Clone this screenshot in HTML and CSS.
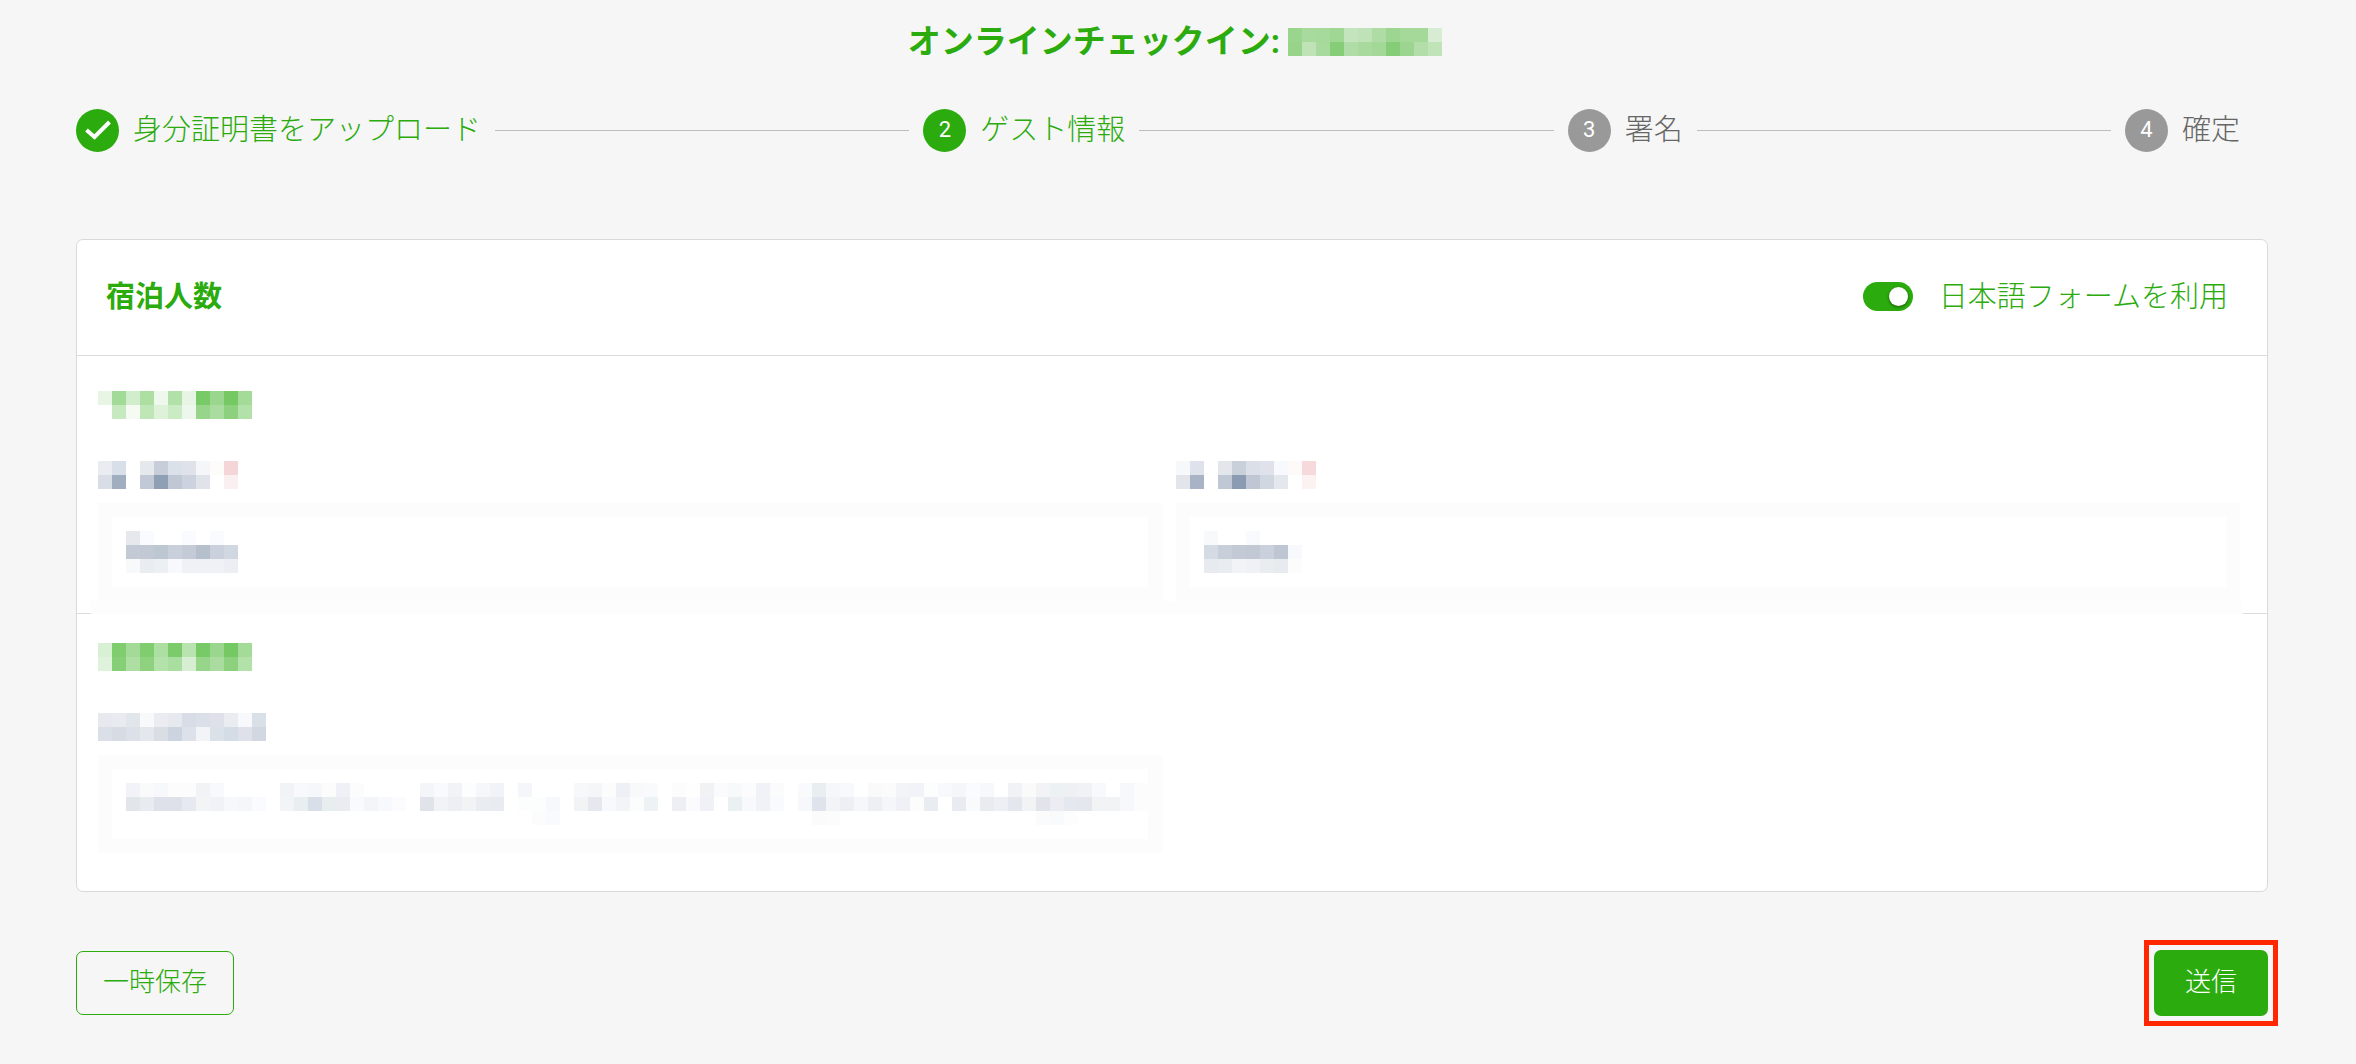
FILE: index.html
```html
<!DOCTYPE html>
<html lang="ja">
<head>
<meta charset="utf-8">
<meta name="viewport" content="width=device-width, initial-scale=1">
<title>オンラインチェックイン</title>
<link rel="stylesheet" href="styles.css">
<script src="mosaic.js" defer></script>
</head>
<body>
<main class="page">
  <h1 class="title">
    <span>オンラインチェックイン:</span>
    <svg class="mosaic" data-rows="9ad58d a8da9d a6da9b a1d795 c3e4bc c0e2b8 aedca4 9cd690 a5d99a a5d99a d8ecd4|97d48a bfe2b7 a8da9d 86cd78 b0dda7 a8da9d a3d898 86cd78 9cd58f b3deaa c0e3b8"></svg>
  </h1>

  <ol class="steps">
    <li class="step is-active">
      <span class="step-dot">
        <svg width="26" height="20" viewBox="0 0 26 20" aria-hidden="true"><path d="M1.500 10 L9.500 17 L24.500 2" fill="none" stroke="#fff" stroke-width="4"/></svg>
      </span>
      <span class="step-label">身分証明書をアップロード</span>
    </li>
    <li class="step-line" role="presentation"></li>
    <li class="step is-active"><span class="step-dot">2</span><span class="step-label">ゲスト情報</span></li>
    <li class="step-line" role="presentation"></li>
    <li class="step"><span class="step-dot">3</span><span class="step-label">署名</span></li>
    <li class="step-line" role="presentation"></li>
    <li class="step"><span class="step-dot">4</span><span class="step-label">確定</span></li>
  </ol>

  <form>
    <div class="card">
      <header class="card-header">
        <h2 class="card-title">宿泊人数</h2>
        <div class="switch">
          <input class="switch-input" type="checkbox" role="switch" id="jp-form" checked>
          <label for="jp-form">日本語フォームを利用</label>
        </div>
      </header>

      <section class="section">
        <h3 class="section-title"><svg class="mosaic" data-rows="e8f5e5 a2da97 d1edcb addfa3 eef8ec b1e0a8 e8f4e4 78ca67 9ad68e 75c963 a5db99|- c7e9c0 f5fbf3 bee6b6 def2d9 cbebc4 edf7eb 97d58a a9dc9e 8dd17e b2e1a9"></svg></h3>
        <div class="fields">
          <div class="field">
            <label class="field-label" for="field-a"><svg class="mosaic" data-rows="e9edf1 d9dfe8 - e5e9ee c8ced9 dbe1e9 dfe2e8 f4f6f9 fefcfa f5d6d8|d9dee6 a1aec0 - c2c9d6 8f9fb4 c1c8d5 ccd3de e0e4ea - fbf0f0"></svg></label>
            <div class="field-box">
              <input class="field-input" type="text" id="field-a">
              <svg class="mosaic field-value" data-rows="e5e9ee fafbfe - - fafbfe - fafbfe -|c3cad6 c3c9d4 bcc7d1 c9d0db c4cbd6 b6c0cd cad1dc d0d7e0|f8f9fb e9edf2 ecf0f3 f8f9fc f0f1f6 f0f1f6 f0f1f6 edeef3"></svg>
            </div>
          </div>
          <div class="field">
            <label class="field-label" for="field-b"><svg class="mosaic" data-rows="f7f8fa dee2ea - e3e7ec c8d0da dbe0e8 dfe2ea f8f9fc fefaf9 f6dadb|e2e6eb a8b4c6 - c1c8d5 8b9bb2 c0c7d4 d1d7e0 e4e8ed - fcf2f1"></svg></label>
            <div class="field-box">
              <input class="field-input" type="text" id="field-b">
              <svg class="mosaic field-value" data-rows="f7f9fa - - f9fafd - - -|d4dbe3 c8cfda c3c9d5 c2c8d4 cad1dc bfc6d3 f8f9fc|e7ebf0 e9edf2 f1f3f7 f0f1f6 e9edf0 e7ebef fcfcfc"></svg>
            </div>
          </div>
        </div>
        <div class="divider"></div>
      </section>

      <section class="section section-last">
        <h3 class="section-title"><svg class="mosaic" data-rows="d8f0d3 80cd70 a3da98 80cd70 addfa3 7bcb6a b9e4b0 78ca67 9ad68e 75c963 a5db99|dff2db 86cf77 addfa3 8ed280 b4e2ab aadda0 d7eed2 97d58a a9dc9e 8dd17e b2e1a9"></svg></h3>
        <div class="fields">
          <div class="field">
            <label class="field-label" for="field-c"><svg class="mosaic" data-rows="e6e9ee e8ebf0 e1e6ea f8f9fb eaecf2 e6e9ee d7dce6 dadfe8 dee1ea e9edf2 f8f9fc dae0e8|dadfe8 d7dce4 dbe0e9 e4e7ec d9dde4 ccd4df dce1ea f3f4f7 dbe1e9 d4dce5 dee1ea d1d8e1"></svg></label>
            <div class="field-box">
              <input class="field-input" type="text" id="field-c">
              <svg class="mosaic field-value" data-rows="f1f3f8 fafafa f6f8fc fcfcfc fcfcfc f1f3f5 f8f9fd - - - - f1f3f5 f8f9fc f6f7fa fcfcfc f0f1f6 fcfcfc - - - - f3f5f8 f9fafd f1f3f6 fcfefe f5f7fb f1f3f8 - f4f6f9 - - - f6f8fa f4f6f8 fcfcfc eff0f6 f9f9fc f9fafc - fcfcfc fefefe f1f2f4 fbfbfe f8f9fb fcfcfc f1f2f7 fbfbfb - f8fafc e9eef1 f5f7fb f8f9fd - fafafa fbfbfb f3f4f8 f2f3f8 fcfefd f8f9fc f5f6f9 f9fbfe f7f8fc - f1f2f6 fafafa f2f3f5 ecf1f3 eef0f4 f1f2f6 f8f9fd - f7f8fc fcfcfc|e2e5ea e8ecf1 dee1ea dee1ea e6eaf0 f3f4f6 f0f2f7 f7f8f9 f5f6f9 fafbfe - f2f4f7 e9eef1 d9dfe8 e8edf0 ebecf1 f9fafc f4f5f8 f8f9fc fcfcfe - e0e4ea f1f3f7 eeeff4 f2f3f5 e9edf1 e8ecf1 - fcfefe fcfdfd f6f8fb - f1f3f5 e5e8ef f8f9fc f2f4f8 fbfdfd edf2f5 - eeeff4 fbfbfe f0f1f6 - ebf0f3 f7f9fc f0f2f7 f9fafd - f7f8fb dfe3eb f3f4f8 eeeff4 f6f7fa eeeff4 f5f6f9 f0f1f6 fcfcfc e9edf2 - e8ecf1 f9fafc e8ecf1 eeeff4 e4e8ee f1f3f5 e1e5eb ecedf2 e5e8ee e4e8ee f2f3f4 f2f3f4 f7f8fc fcfcfc|- - - - - - - - - - - - - - - - - - - - - - - - - - - - - fcfcfd f8fafd - - - - - - - - - - - - - - - - - - fbfbfb fcfcfc - - - - - - - - - - - - - - fbfbfb f9fafc fdfdfd - - - - -"></svg>
            </div>
          </div>
        </div>
      </section>
    </div>

    <div class="actions">
      <button class="btn btn-outline" type="button">一時保存</button>
      <button class="btn btn-primary" type="submit">送信</button>
    </div>
  </form>
</main>
</body>
</html>
```
FILE: styles.css
```css
* { box-sizing: border-box; }

body {
  margin: 0;
  background: #f6f6f6;
  color: #2bab0d;
  font-family: Roboto, "Noto Sans CJK JP", sans-serif;
  font-size: 29px;
  font-weight: 300;
  line-height: 44px;
}

h1, h2, h3, ol { margin: 0; padding: 0; }

.page { padding: 18px 88px 36px 76px; }

.mosaic { display: block; flex: none; }

.title {
  display: flex;
  justify-content: center;
  align-items: center;
  gap: 8px;
  height: 48px;
  padding-left: 6px;
  font-size: 33px;
  font-weight: 700;
}

.steps {
  display: flex;
  align-items: center;
  gap: 14px;
  margin-top: 42px;
  padding-right: 28px;
  list-style: none;
}

.step {
  display: flex;
  align-items: center;
  gap: 14px;
  color: #666;
  white-space: nowrap;
}

.step.is-active { color: #2bab0d; }

.step-dot {
  display: flex;
  justify-content: center;
  align-items: center;
  width: 43px;
  height: 43px;
  border-radius: 50%;
  background: #999;
  color: #fff;
  font-size: 22px;
  font-weight: 400;
}

.is-active .step-dot { background: #2bab0d; }

.step-line {
  flex: 1;
  height: 1px;
  background: #bdbdbd;
}

.card {
  margin-top: 87px;
  border: 1px solid #d9d9d9;
  border-radius: 7px;
  background: #fff;
}

.card-header {
  display: flex;
  justify-content: space-between;
  align-items: center;
  height: 116px;
  padding: 0 39px 2px 29px;
  border-bottom: 1px solid #dcdcdc;
}

.card-title { font-size: 29px; font-weight: 700; }

.switch {
  display: flex;
  align-items: center;
  gap: 26px;
}

.switch-input {
  display: flex;
  align-items: center;
  justify-content: flex-start;
  appearance: none;
  width: 50px;
  height: 29px;
  margin: 0;
  padding: 0 5px;
  border-radius: 15px;
  background: #999;
}

.switch-input:checked {
  justify-content: flex-end;
  background: #2bab0d;
}

.switch-input::before {
  content: "";
  width: 19px;
  height: 19px;
  border-radius: 50%;
  background: #fff;
  box-shadow: 0 1px 3px rgba(0, 0, 0, 0.5);
}

.section { padding-top: 35px; }

.section-last { padding: 29px 0 38px; }

.section-title { padding-left: 21px; }

.fields {
  display: grid;
  grid-template-columns: 1fr 1fr;
  gap: 14px;
  margin-top: 42px;
  padding: 0 27px 0 21px;
}

.field-label { display: block; }

.field-box {
  position: relative;
  margin-top: 14px;
}

.field-input {
  display: block;
  width: 100%;
  height: 98px;
  padding: 0 14px;
  border: 14px solid #fcfcfc;
  background: #fff;
  font: inherit;
}

.field-value {
  position: absolute;
  top: 28px;
  left: 28px;
  pointer-events: none;
}

.divider {
  height: 13px;
  border: solid transparent;
  border-width: 0 24px 0 14px;
  background:
    linear-gradient(#fdfdfd, #fdfdfd) padding-box,
    linear-gradient(#dcdcdc, #dcdcdc) bottom / 100% 1px no-repeat border-box;
}

.actions {
  display: flex;
  justify-content: space-between;
  align-items: center;
  margin-top: 58px;
}

.btn {
  border-radius: 7px;
  font: inherit;
  font-size: 26px;
  line-height: 38px;
}

.btn-outline {
  height: 64px;
  padding: 0 26px 2px;
  border: 1px solid #2bab0d;
  background: transparent;
  color: #2bab0d;
}

.btn-primary {
  position: relative;
  height: 66px;
  padding: 0 31px 2px;
  border: 0;
  background: #2bab0d;
  color: #fff;
}

.btn-primary::after {
  content: "";
  position: absolute;
  inset: -10px;
  border: 5px solid #ff2600;
}
```
FILE: mosaic.js
```js
// Fills every masked value with its grid of 14px colour cells.
const CELL = 14;
const NS = "http://www.w3.org/2000/svg";

document.querySelectorAll("svg[data-rows]").forEach((svg) => {
  const rows = svg.dataset.rows.split("|").map((row) => row.split(" "));
  svg.setAttribute("width", rows[0].length * CELL);
  svg.setAttribute("height", rows.length * CELL);
  svg.setAttribute("shape-rendering", "crispEdges");
  rows.forEach((row, y) => row.forEach((color, x) => {
    if (color === "-") return;
    const rect = document.createElementNS(NS, "rect");
    rect.setAttribute("x", x * CELL);
    rect.setAttribute("y", y * CELL);
    rect.setAttribute("width", CELL);
    rect.setAttribute("height", CELL);
    rect.setAttribute("fill", "#" + color);
    svg.append(rect);
  }));
});
```
